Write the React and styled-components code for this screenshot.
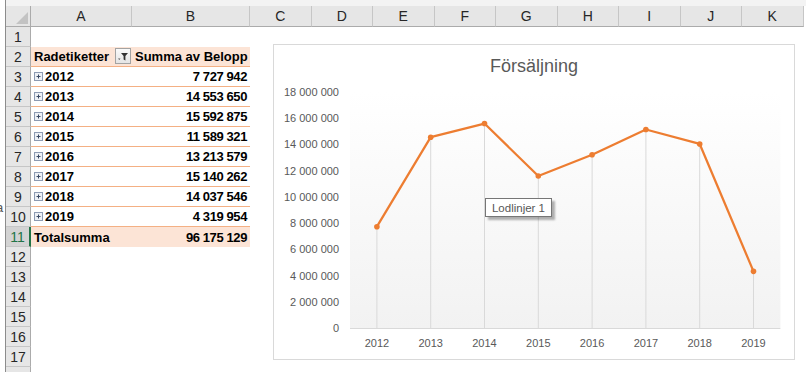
import React from 'react';
import styled, { createGlobalStyle } from 'styled-components';

const GlobalStyle = createGlobalStyle`
  html, body {
    margin: 0;
    padding: 0;
    background: #fff;
  }
  body {
    width: 806px;
    height: 372px;
    overflow: hidden;
    font-family: 'Liberation Sans', Arial, sans-serif;
  }
`;

const Window = styled.div`
  position: relative;
  display: flex;
  width: 806px;
  height: 372px;
  overflow: hidden;
`;

const SideStrip = styled.div`
  flex: none;
  width: 5px;
  border-right: 1px solid #8c8c8c;
  background: #fff;
  overflow: hidden;
  font: 13px 'Liberation Sans', Arial, sans-serif;
  color: #555;
  padding-top: 200px;
  text-indent: -4px;
`;

const Main = styled.div`
  flex: 1;
  display: flex;
  flex-direction: column;
  min-height: 0;
`;

const TopStrip = styled.div`
  flex: none;
  height: 6px;
  background: #f3f3f3;
`;

const Sheet = styled.div`
  flex: none;
  display: grid;
  grid-template-columns: 25px 101px 118px repeat(9, 61.5px);
  grid-template-rows: 21px;
  grid-auto-rows: 20px;
`;

const Corner = styled.div`
  position: relative;
  background: #e6e6e6;
  border-right: 1px solid #ababab;
  border-bottom: 1px solid #ababab;
  box-sizing: border-box;

  &::after {
    content: '';
    position: absolute;
    right: 2px;
    bottom: 2px;
    border-style: solid;
    border-width: 0 0 12px 12px;
    border-color: transparent transparent #c3c3c3 transparent;
  }
`;

const ColHead = styled.div`
  display: flex;
  align-items: center;
  justify-content: center;
  background: #e6e6e6;
  border-right: 1px solid #c6c6c6;
  border-bottom: 1px solid #ababab;
  box-sizing: border-box;
  font: 14px 'Liberation Sans', Arial, sans-serif;
  color: #262626;
`;

const RowHead = styled.div`
  display: flex;
  align-items: center;
  justify-content: center;
  background: ${p => (p.$active ? '#d3d3d3' : '#e6e6e6')};
  border-bottom: 1px solid #c6c6c6;
  border-right: ${p => (p.$active ? '2px solid #217346' : '1px solid #ababab')};
  box-sizing: border-box;
  font: 14px 'Liberation Sans', Arial, sans-serif;
  color: ${p => (p.$active ? '#217346' : '#262626')};
`;

const Cell = styled.div`
  display: flex;
  align-items: center;
  justify-content: ${p => (p.$right ? 'flex-end' : 'space-between')};
  gap: 2px;
  padding: 0 3px;
  box-sizing: border-box;
  font: bold 13px 'Liberation Sans', Arial, sans-serif;
  letter-spacing: ${p => (p.$right ? '-0.4px' : '0')};
  color: #000;
  white-space: nowrap;
  background: ${p => (p.$tone === 'head' || p.$tone === 'total' ? '#fce4d6' : 'transparent')};
  border-bottom: ${p => (p.$tone === 'head' || p.$tone === 'item' ? '1px solid #f4b084' : 'none')};
`;

const Filler = styled.div`
  grid-column: span 9;
`;

const Label = styled.span`
  display: flex;
  align-items: center;
  gap: 2px;
`;

const FilterButton = styled.span`
  display: flex;
  width: 16px;
  height: 16px;
  margin-right: -2px;
  margin-top: -2px;
`;

const ExpandBox = styled.span`
  display: flex;
  width: 9px;
  height: 9px;
`;

const ChartBox = styled.div`
  position: absolute;
  left: 273px;
  top: 44px;
  width: 522px;
  height: 316px;
  box-sizing: border-box;
  border: 1px solid #d9d9d9;
  background: #fff;
  display: flex;
  flex-direction: column;
`;

const ChartTitle = styled.div`
  flex: none;
  padding-top: 11px;
  height: 22px;
  line-height: 22px;
  text-align: center;
  font: 18px 'Liberation Sans', Arial, sans-serif;
  color: #595959;
`;

const Tip = styled.div`
  position: absolute;
  left: 211px;
  top: 153px;
  width: 67px;
  height: 19px;
  box-sizing: border-box;
  border: 1px solid #767676;
  background: #fff;
  box-shadow: 3px 3px 2px rgba(0, 0, 0, 0.3);
  display: flex;
  align-items: center;
  justify-content: center;
  font: 11.5px 'Liberation Sans', Arial, sans-serif;
  color: #575757;
`;

const columns = ['A', 'B', 'C', 'D', 'E', 'F', 'G', 'H', 'I', 'J', 'K'];
const sales = [
  ['2012', 7727942],
  ['2013', 14553650],
  ['2014', 15592875],
  ['2015', 11589321],
  ['2016', 13213579],
  ['2017', 15140262],
  ['2018', 14037546],
  ['2019', 4319954],
];
const total = sales.reduce((s, [, v]) => s + v, 0);

const fmt = n => String(n).replace(/\B(?=(\d{3})+(?!\d))/g, ' ');

const FilterIcon = () => (
  <svg width="16" height="16" viewBox="0 0 16 16">
    <defs>
      <linearGradient id="fb" x1="0" y1="0" x2="0" y2="1">
        <stop offset="0" stopColor="#fbfbfb" />
        <stop offset="1" stopColor="#e4e4e4" />
      </linearGradient>
    </defs>
    <rect x="0.5" y="0.5" width="15" height="15" fill="url(#fb)" stroke="#a3a3a3" />
    <path d="M6 5h7l-2.6 3v4.5l-1.8-1V8z" fill="#333" />
    <path d="M3 10.5h2.5l-1.25 1.5z" fill="#555" />
  </svg>
);

const PlusIcon = () => (
  <svg width="9" height="9" viewBox="0 0 9 9">
    <rect x="0.5" y="0.5" width="8" height="8" fill="#eef1f6" stroke="#8d9bb3" />
    <path d="M2.5 4.5h4M4.5 2.5v4" stroke="#3b4a66" strokeWidth="1" />
  </svg>
);

// plot area in page pixels
const PX0 = 350;
const PW = 430.4;
const PY0 = 92;
const PY1 = 328;
const MAX = 18000000;
const xAt = i => PX0 + (PW / 8) * (i + 0.5);
const yAt = v => PY1 - (v / MAX) * (PY1 - PY0);

function LineChart() {
  const points = sales.map(([, v], i) => `${xAt(i)},${yAt(v)}`).join(' ');
  const ticks = Array.from({ length: 10 }, (_, i) => i * 2000000);
  return (
    <svg width="520" height="281" viewBox="274 78 520 281" style={{ display: 'block', flex: 'none' }}>
      <defs>
        <linearGradient id="plotbg" x1="0" y1="0" x2="0" y2="1">
          <stop offset="0" stopColor="#ffffff" />
          <stop offset="1" stopColor="#f2f2f2" />
        </linearGradient>
      </defs>
      <rect x={PX0} y={PY0} width={PW} height={PY1 - PY0} fill="url(#plotbg)" />
      {sales.map(([, v], i) => (
        <line key={i} x1={xAt(i)} x2={xAt(i)} y1={yAt(v)} y2={PY1} stroke="#d9d9d9" strokeWidth="1" />
      ))}
      <line x1={PX0} x2={PX0 + PW} y1={PY1 + 0.5} y2={PY1 + 0.5} stroke="#d9d9d9" strokeWidth="1" />
      <g fontFamily="'Liberation Sans', Arial, sans-serif" fontSize="11" fill="#595959">
        {ticks.map(t => (
          <text key={t} x="339" y={yAt(t) + 4} textAnchor="end">{fmt(t)}</text>
        ))}
        {sales.map(([y], i) => (
          <text key={y} x={xAt(i)} y="347" textAnchor="middle">{y}</text>
        ))}
      </g>
      <polyline points={points} fill="none" stroke="#ed7d31" strokeWidth="2.25" strokeLinejoin="round" />
      {sales.map(([, v], i) => (
        <circle key={i} cx={xAt(i)} cy={yAt(v)} r="2.8" fill="#ed7d31" />
      ))}
    </svg>
  );
}

export default function App() {
  const rows = [];
  for (let r = 1; r <= 18; r++) {
    let a = null;
    let b = null;
    let tone;
    if (r === 2) {
      tone = 'head';
      a = (
        <>
          <span>Radetiketter</span>
          <FilterButton><FilterIcon /></FilterButton>
        </>
      );
      b = 'Summa av Belopp';
    } else if (r >= 3 && r <= 10) {
      tone = 'item';
      const [year, value] = sales[r - 3];
      a = (
        <Label>
          <ExpandBox><PlusIcon /></ExpandBox>
          {year}
        </Label>
      );
      b = fmt(value);
    } else if (r === 11) {
      tone = 'total';
      a = 'Totalsumma';
      b = fmt(total);
    }
    rows.push(
      <React.Fragment key={r}>
        {/* row 18 only peeks in at the bottom edge, its number is below the fold */}
        <RowHead $active={r === 11}>{r < 18 ? r : null}</RowHead>
        <Cell $tone={tone}>{a}</Cell>
        <Cell $tone={tone} $right={r !== 2}>{b}</Cell>
        <Filler />
      </React.Fragment>
    );
  }

  return (
    <>
      <GlobalStyle />
      <Window>
        <SideStrip>a</SideStrip>
        <Main>
          <TopStrip />
          <Sheet>
            <Corner />
            {columns.map(c => (
              <ColHead key={c}>{c}</ColHead>
            ))}
            {rows}
          </Sheet>
        </Main>
        <ChartBox>
          <ChartTitle>Försäljning</ChartTitle>
          <LineChart />
          <Tip>Lodlinjer 1</Tip>
        </ChartBox>
      </Window>
    </>
  );
}
